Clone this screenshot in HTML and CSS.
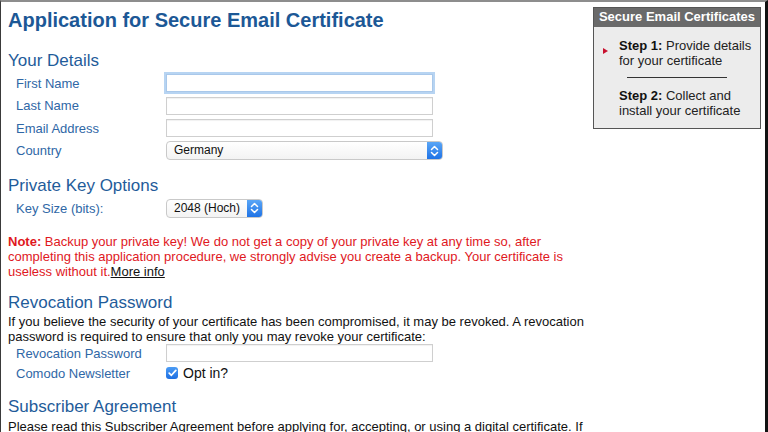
FILE: index.html
```html
<!DOCTYPE html>
<html lang="en">
<head>
<meta charset="utf-8">
<title>Application for Secure Email Certificate</title>
<link rel="stylesheet" href="styles.css">
</head>
<body>
<div class="frame">
  <main class="main">
    <h1 class="title">Application for Secure Email Certificate</h1>

    <h2 class="section first">Your Details</h2>
    <div class="fields">
      <label class="label">First Name</label>
      <div class="control"><span class="input focused"></span></div>
      <label class="label">Last Name</label>
      <div class="control"><span class="input"></span></div>
      <label class="label">Email Address</label>
      <div class="control"><span class="input"></span></div>
      <label class="label">Country</label>
      <div class="control">
        <span class="select wide"><span class="select-text">Germany</span><span class="stepper"><svg width="9" height="12" viewBox="0 0 9 12"><path d="M1.5 4.5 4.5 1.5 7.5 4.5M1.5 7.5 4.5 10.5 7.5 7.5" fill="none" stroke="#fff" stroke-width="1.5" stroke-linecap="round" stroke-linejoin="round"/></svg></span></span>
      </div>
    </div>

    <h2 class="section">Private Key Options</h2>
    <div class="fields">
      <label class="label">Key Size (bits):</label>
      <div class="control">
        <span class="select narrow"><span class="select-text">2048 (Hoch)</span><span class="stepper"><svg width="9" height="12" viewBox="0 0 9 12"><path d="M1.5 4.5 4.5 1.5 7.5 4.5M1.5 7.5 4.5 10.5 7.5 7.5" fill="none" stroke="#fff" stroke-width="1.5" stroke-linecap="round" stroke-linejoin="round"/></svg></span></span>
      </div>
    </div>

    <p class="note"><b>Note:</b> Backup your private key! We do not get a copy of your private key at any time so, after completing this application procedure, we strongly advise you create a backup. Your certificate is useless without it.<a class="more" href="#">More info</a></p>

    <h2 class="section">Revocation Password</h2>
    <p class="text">If you believe the security of your certificate has been compromised, it may be revoked. A revocation password is required to ensure that only you may revoke your certificate:</p>
    <div class="fields tight">
      <label class="label">Revocation Password</label>
      <div class="control"><span class="input"></span></div>
      <label class="label">Comodo Newsletter</label>
      <div class="control">
        <span class="checkbox"><svg width="9" height="8" viewBox="0 0 9 8"><path d="M1.2 4.2 3.4 6.3 7.8 1.4" fill="none" stroke="#fff" stroke-width="1.7" stroke-linecap="round" stroke-linejoin="round"/></svg></span>
        <span class="opt">Opt in?</span>
      </div>
    </div>

    <h2 class="section">Subscriber Agreement</h2>
    <p class="text">Please read this Subscriber Agreement before applying for, accepting, or using a digital certificate. If you do not agree to the terms of this Subscriber Agreement, do not apply for, accept, or use the digital certificate.</p>
  </main>

  <aside class="steps">
    <div class="steps-head">Secure Email Certificates</div>
    <div class="steps-body">
      <div class="step current"><b>Step 1:</b> Provide details for your certificate</div>
      <div class="rule"></div>
      <div class="step"><b>Step 2:</b> Collect and install your certificate</div>
    </div>
  </aside>
</div>
</body>
</html>
```

FILE: styles.css
```css
html, body {
  margin: 0;
  padding: 0;
  background: #fff;
}

body {
  font-family: "Liberation Sans", Arial, Helvetica, sans-serif;
  font-size: 13px;
  color: #111;
}

.frame {
  box-sizing: border-box;
  height: 432px;
  overflow: hidden;
  border-top: 2px solid #8d8d8d;
  border-left: 1px solid #3a3a3a;
  border-right: 3px solid #121212;
  display: flex;
  align-items: flex-start;
  gap: 8px;
  padding-left: 7px;
}

.main {
  width: 577px;
  flex: none;
  margin-top: 6px;
}

.title {
  margin: 0;
  font-size: 20px;
  line-height: 24px;
  font-weight: bold;
  color: #1c5896;
}

.section {
  margin: 14px 0 0;
  font-size: 17px;
  line-height: 20px;
  font-weight: normal;
  color: #1f5c9a;
}

.section.first {
  margin-top: 19px;
}

.fields {
  display: grid;
  grid-template-columns: 158px 1fr;
  grid-auto-rows: 22.5px;
  margin-top: 1px;
}

.fields.tight {
  grid-auto-rows: 20px;
  margin-top: -1px;
}

.label {
  display: flex;
  align-items: center;
  padding-left: 8px;
  color: #2f67a6;
  line-height: 15px;
}

.control {
  display: flex;
  align-items: center;
}

.input {
  box-sizing: border-box;
  width: 267px;
  height: 18px;
  border: 1px solid #cfcfcf;
  box-shadow: inset 0 1px 1px rgba(0, 0, 0, 0.06);
  background: #fff;
}

.input.focused {
  border-color: #a9c8ea;
  box-shadow: 0 0 0 2px #b7d4f2;
}

.select {
  box-sizing: border-box;
  height: 19px;
  border: 1px solid #c9c9c9;
  border-radius: 4px;
  background: linear-gradient(#fff, #f3f3f3);
  display: flex;
  align-items: stretch;
  overflow: hidden;
  font-size: 12px;
}

.select.wide { width: 277px; }
.select.narrow { width: 97px; }

.select-text {
  flex: 1;
  padding-left: 7px;
  line-height: 17px;
  color: #111;
}

.stepper {
  width: 15px;
  background: linear-gradient(#5aa6f6, #1f73e6);
  display: flex;
  align-items: center;
  justify-content: center;
}

.note {
  margin: 14px 0 0;
  line-height: 15px;
  color: #e0181e;
}

.note b { font-weight: bold; }

.more {
  color: #111;
  text-decoration: underline;
}

.text {
  margin: 1.5px 0 0;
  line-height: 15px;
  color: #111;
}

.checkbox {
  box-sizing: border-box;
  width: 12px;
  height: 12px;
  border-radius: 3px;
  background: linear-gradient(#4c9cf5, #1d6fe2);
  display: flex;
  align-items: center;
  justify-content: center;
}

.opt {
  margin-left: 5px;
  font-size: 14px;
  color: #111;
}

.steps {
  box-sizing: border-box;
  width: 168px;
  flex: none;
  margin-top: 5px;
  border: 1px solid #555;
  background: #ececec;
}

.steps-head {
  background: #6a6a6a;
  color: #fff;
  font-weight: bold;
  font-size: 13px;
  line-height: 18px;
  text-align: center;
  padding-bottom: 1px;
}

.steps-body {
  padding: 12px 4px 10px 25px;
}

.step {
  position: relative;
  line-height: 14.5px;
  color: #222;
}

.step b { color: #111; }

.step.current::before {
  content: "";
  position: absolute;
  left: -16px;
  top: 9px;
  border-left: 5px solid #c8102e;
  border-top: 3.5px solid transparent;
  border-bottom: 3.5px solid transparent;
}

.rule {
  height: 1px;
  background: #333;
  margin: 9px 29px 11px 8px;
}
```
